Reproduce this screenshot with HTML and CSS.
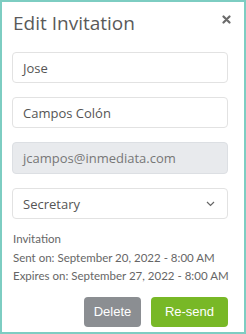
FILE: index.html
```html
<!DOCTYPE html>
<html>
<head>
<meta charset="utf-8">
<link rel="stylesheet" href="styles.css">
</head>
<body>
<div class="modal">
  <div class="header">
    <h1 class="title">Edit Invitation</h1>
    <svg class="close" width="9" height="9" viewBox="0 0 9 9"><path d="M1.5 1.5l6 6M7.5 1.5l-6 6" stroke="#6b6b6b" stroke-width="2.2" stroke-linecap="round"/></svg>
  </div>
  <div class="form">
    <div class="field">Jose</div>
    <div class="field">Campos Colón</div>
    <div class="field disabled">jcampos@inmediata.com</div>
    <div class="field select">
      <span>Secretary</span>
      <svg width="9" height="6" viewBox="0 0 9 6"><path d="M1 1l3.5 3.5L8 1" fill="none" stroke="#666" stroke-width="1.2"/></svg>
    </div>
  </div>
  <div class="info">
    <div>Invitation</div>
    <div>Sent on: September 20, 2022 - 8:00 AM</div>
    <div>Expires on: September 27, 2022 - 8:00 AM</div>
  </div>
  <div class="actions">
    <button class="btn delete">Delete</button>
    <button class="btn resend">Re-send</button>
  </div>
</div>
</body>
</html>
```
FILE: styles.css
```css
html, body { margin: 0; padding: 0; background: #fff; }
.modal {
  width: 246px;
  height: 334px;
  box-sizing: border-box;
  border: 2px solid #7dcdc2;
  padding: 0 16px 0 10px;
  font-family: "Open Sans", sans-serif;
  color: #555;
}
.header {
  display: flex;
  justify-content: space-between;
  align-items: flex-start;
  height: 50px;
}
.title {
  margin: 8px 0 0 1px;
  font-size: 19px;
  font-weight: 400;
  color: #5a5a5a;
  line-height: 26px;
}
.close {
  margin: 13px -3px 0 0;
}
.form {
  display: flex;
  flex-direction: column;
  gap: 14px;
}
.field {
  height: 31px;
  box-sizing: border-box;
  border: 1px solid #e2e2e2;
  border-radius: 4px;
  padding: 0 10px;
  display: flex;
  align-items: center;
  font-size: 13px;
  color: #555;
}
.field.disabled {
  background: #e8eaed;
  border-color: #dcdfe3;
  color: #777;
  height: 32px;
}
.field.select {
  justify-content: space-between;
  padding-right: 12px;
}
.info {
  margin-top: 11px;
  font-family: Lato, "Liberation Sans", sans-serif;
  font-size: 11.5px;
  line-height: 18.5px;
  color: #666;
  white-space: nowrap;
  margin-left: 1px;
}
.actions {
  display: flex;
  justify-content: flex-end;
  gap: 10px;
  margin-top: 11px;
}
.btn {
  height: 30px;
  border: none;
  border-radius: 4px;
  color: #fff;
  font-family: "Liberation Sans", Arial, sans-serif;
  font-size: 13px;
  padding: 0;
}
.delete { width: 57px; background: #8b8e92; }
.resend { width: 77px; background: #78b826; }
```
